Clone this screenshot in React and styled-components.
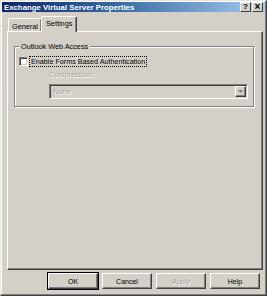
import React from 'react'
import styled, { createGlobalStyle } from 'styled-components'

const GlobalStyle = createGlobalStyle`
  html, body {
    margin: 0;
    padding: 0;
    background: #d4d0c8;
  }
  body {
    font-family: Tahoma, "Liberation Sans", Arial, sans-serif;
    font-size: 7px;
    color: #000;
  }
`

const App = () => (
  <>
    <GlobalStyle />
    <Window>
      <TitleBar>
        <TitleText>Exchange Virtual Server Properties</TitleText>
        <CaptionButtons>
          <CaptionButton>?</CaptionButton>
          <CaptionButton close>×</CaptionButton>
        </CaptionButtons>
      </TitleBar>
      <Body>
        <TabRow>
          <Tab>General</Tab>
          <Tab selected>Settings</Tab>
        </TabRow>
        <Panel>
          <GroupBox>
            <Legend>Outlook Web Access</Legend>
            <CheckRow>
              <CheckBox />
              <FocusLabel>Enable Forms Based Authentication</FocusLabel>
            </CheckRow>
            <Indented>
              <DisabledLabel>Compression:</DisabledLabel>
              <Combo>
                <ComboText>None</ComboText>
                <ComboButton>
                  <svg width="5" height="3" viewBox="0 0 5 3">
                    <path d="M0 0h5L2.5 3z" fill="#808080" />
                  </svg>
                </ComboButton>
              </Combo>
            </Indented>
          </GroupBox>
        </Panel>
        <ButtonRow>
          <Button isDefault>OK</Button>
          <Button>Cancel</Button>
          <Button disabled>Apply</Button>
          <Button>Help</Button>
        </ButtonRow>
      </Body>
    </Window>
  </>
)

const Window = styled.div`
  width: 267px;
  height: 296px;
  box-sizing: border-box;
  display: flex;
  flex-direction: column;
  background: #d4d0c8;
  border-left: 1px solid #e8e6e0;
  border-top: 1px solid #e8e6e0;
  border-right: 1px solid #404040;
  border-bottom: 1px solid #404040;
  box-shadow: inset -1px -1px 0 #808080, inset 1px 1px 0 #fff;
  padding: 1px;
`

const TitleBar = styled.div`
  height: 13px;
  display: flex;
  align-items: center;
  justify-content: space-between;
  padding: 0 2px 0 2px;
  background: linear-gradient(to right, #0a246a 0%, #3a6ea5 45%, #a6caf0 100%);
`

const TitleText = styled.div`
  color: #fff;
  font-weight: bold;
  font-size: 7.8px;
  white-space: nowrap;
`

const CaptionButtons = styled.div`
  display: flex;
  gap: 1px;
`

const CaptionButton = styled.div`
  width: 11px;
  height: 10px;
  box-sizing: border-box;
  background: #d4d0c8;
  border-left: 1px solid #fff;
  border-top: 1px solid #fff;
  border-right: 1px solid #404040;
  border-bottom: 1px solid #404040;
  display: flex;
  align-items: center;
  justify-content: center;
  font-family: "Liberation Sans", Arial, sans-serif;
  font-weight: bold;
  font-size: ${p => (p.close ? '10px' : '8px')};
  line-height: 1;
  color: #000;
`

const Body = styled.div`
  flex: 1;
  display: flex;
  flex-direction: column;
  padding: 3px 4px 5px 4px;
`

const TabRow = styled.div`
  display: flex;
  align-items: flex-end;
  height: 16px;
  padding-left: 2px;
  position: relative;
  z-index: 1;
`

const Tab = styled.div`
  height: ${p => (p.selected ? '16px' : '13px')};
  box-sizing: border-box;
  padding: ${p => (p.selected ? '2px 4px 0 4px' : '3px 3px 0 3px')};
  margin-left: ${p => (p.selected ? '-1px' : '0')};
  background: #d4d0c8;
  border-left: 1px solid #fff;
  border-top: 1px solid #fff;
  border-right: 1px solid #404040;
  box-shadow: inset -1px 0 0 #808080;
  border-top-left-radius: 2px;
  border-top-right-radius: 2px;
  margin-bottom: ${p => (p.selected ? '-1px' : '0')};
  white-space: nowrap;
  line-height: 10px;
  font-size: 7.3px;
`

const Panel = styled.div`
  height: 239px;
  box-sizing: border-box;
  margin-left: 1px;
  width: 256px;
  border-left: 1px solid #fff;
  border-top: 1px solid #fff;
  border-right: 1px solid #404040;
  border-bottom: 1px solid #404040;
  box-shadow: inset -1px -1px 0 #808080;
  padding: 14px 8px 0 6px;
`

const GroupBox = styled.div`
  position: relative;
  height: 61px;
  box-sizing: border-box;
  border: 1px solid #808080;
  box-shadow: 1px 1px 0 #fff, inset 1px 1px 0 #fff;
  padding: 9px 0 0 4px;
`

const Legend = styled.div`
  position: absolute;
  top: -5px;
  left: 4px;
  padding: 0 2px;
  background: #d4d0c8;
  line-height: 9px;
  white-space: nowrap;
  font-size: 7.3px;
`

const CheckRow = styled.div`
  display: flex;
  align-items: center;
  gap: 1px;
`

const CheckBox = styled.div`
  width: 9px;
  height: 9px;
  box-sizing: border-box;
  background: #fff;
  border-left: 1px solid #808080;
  border-top: 1px solid #808080;
  border-right: 1px solid #fff;
  border-bottom: 1px solid #fff;
  box-shadow: inset 1px 1px 0 #404040, inset -1px -1px 0 #d4d0c8;
`

const FocusLabel = styled.div`
  border: 1px dotted #000;
  padding: 0 1px;
  line-height: 9px;
  white-space: nowrap;
  font-size: 7.2px;
`

const Indented = styled.div`
  padding-left: 30px;
  padding-top: 3px;
`

const DisabledLabel = styled.div`
  color: #a0a0a0;
  text-shadow: 1px 1px 0 #fff;
  line-height: 9px;
  font-size: 7.3px;
`

const Combo = styled.div`
  margin-top: 5px;
  width: 199px;
  height: 15px;
  box-sizing: border-box;
  display: flex;
  align-items: center;
  justify-content: space-between;
  background: #d4d0c8;
  border-left: 1px solid #808080;
  border-top: 1px solid #808080;
  border-right: 1px solid #fff;
  border-bottom: 1px solid #fff;
  box-shadow: inset 1px 1px 0 #404040;
  padding: 1px 1px 1px 3px;
`

const ComboText = styled.span`
  color: #a0a0a0;
  text-shadow: 1px 1px 0 #fff;
  font-size: 7.3px;
`

const ComboButton = styled.div`
  width: 11px;
  height: 11px;
  box-sizing: border-box;
  display: flex;
  align-items: center;
  justify-content: center;
  border-left: 1px solid #fff;
  border-top: 1px solid #fff;
  border-right: 1px solid #404040;
  border-bottom: 1px solid #404040;
  box-shadow: inset -1px -1px 0 #808080;
`

const ButtonRow = styled.div`
  display: flex;
  justify-content: flex-end;
  gap: 4px;
  margin-top: 3px;
  padding-right: 1px;
`

const Button = styled.div`
  width: 50px;
  height: 16px;
  box-sizing: border-box;
  display: flex;
  align-items: center;
  justify-content: center;
  background: #d4d0c8;
  border-left: 1px solid #fff;
  border-top: 1px solid #fff;
  border-right: 1px solid #404040;
  border-bottom: 1px solid #404040;
  box-shadow: inset -1px -1px 0 #808080;
  outline: ${p => (p.isDefault ? '1px solid #000' : 'none')};
  color: ${p => (p.disabled ? '#a0a0a0' : '#000')};
  text-shadow: ${p => (p.disabled ? '1px 1px 0 #fff' : 'none')};
`

export default App
